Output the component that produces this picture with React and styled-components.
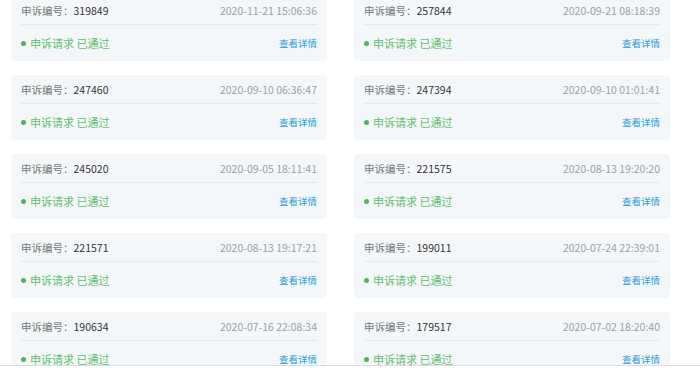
import React from "react";
import styled, { createGlobalStyle } from "styled-components";

const GlobalStyle = createGlobalStyle`
  html, body {
    margin: 0;
    padding: 0;
    background: #ffffff;
    overflow: hidden;
  }
  body {
    font-family: "Noto Sans CJK SC", "Noto Sans", sans-serif;
  }
`;

const records = [
  { id: "319849", time: "2020-11-21 15:06:36" },
  { id: "257844", time: "2020-09-21 08:18:39" },
  { id: "247460", time: "2020-09-10 06:36:47" },
  { id: "247394", time: "2020-09-10 01:01:41" },
  { id: "245020", time: "2020-09-05 18:11:41" },
  { id: "221575", time: "2020-08-13 19:20:20" },
  { id: "221571", time: "2020-08-13 19:17:21" },
  { id: "199011", time: "2020-07-24 22:39:01" },
  { id: "190634", time: "2020-07-16 22:08:34" },
  { id: "179517", time: "2020-07-02 18:20:40" },
];

export default function App() {
  return (
    <Page>
      <GlobalStyle />
      <List>
        {records.map((r) => (
          <Card key={r.id}>
            <CardHead>
              <Label>
                申诉编号：<Num>{r.id}</Num>
              </Label>
              <Time>{r.time}</Time>
            </CardHead>
            <CardFoot>
              <Status>
                <Dot />
                申诉请求 已通过
              </Status>
              <Link href="#">查看详情</Link>
            </CardFoot>
          </Card>
        ))}
      </List>
      <BottomEdge />
    </Page>
  );
}

const Page = styled.div`
  width: 700px;
  height: 368px;
  overflow: hidden;
  padding-left: 11px;
  box-sizing: border-box;
`;

const List = styled.div`
  display: grid;
  grid-template-columns: 316px 316px;
  column-gap: 27px;
  row-gap: 14px;
  margin-top: -4px;
`;

const Card = styled.div`
  background: #f4f7f9;
  border-radius: 4px;
  padding: 0 10px;
  height: 65px;
  box-sizing: border-box;
`;

const CardHead = styled.div`
  height: 28px;
  display: flex;
  align-items: center;
  justify-content: space-between;
  border-bottom: 1px solid #e4e8eb;
  font-size: 10.5px;
`;

const Label = styled.span`
  color: #777;
`;

const Num = styled.span`
  color: #333;
`;

const Time = styled.span`
  color: #a0a0a0;
`;

const CardFoot = styled.div`
  height: 36px;
  display: flex;
  align-items: center;
  justify-content: space-between;
`;

const Status = styled.span`
  display: flex;
  align-items: center;
  color: #62c070;
  font-size: 11px;
`;

const Dot = styled.i`
  width: 5px;
  height: 5px;
  border-radius: 50%;
  background: #4fb35f;
  margin-right: 4px;
`;

const Link = styled.a`
  color: #2a9bd6;
  font-size: 9.5px;
  text-decoration: none;
`;

const BottomEdge = styled.div`
  position: fixed;
  left: 0;
  right: 0;
  bottom: 0;
  height: 2px;
  background: #ffffff;
  border-top: 1px solid #dcdcdc;
`;
